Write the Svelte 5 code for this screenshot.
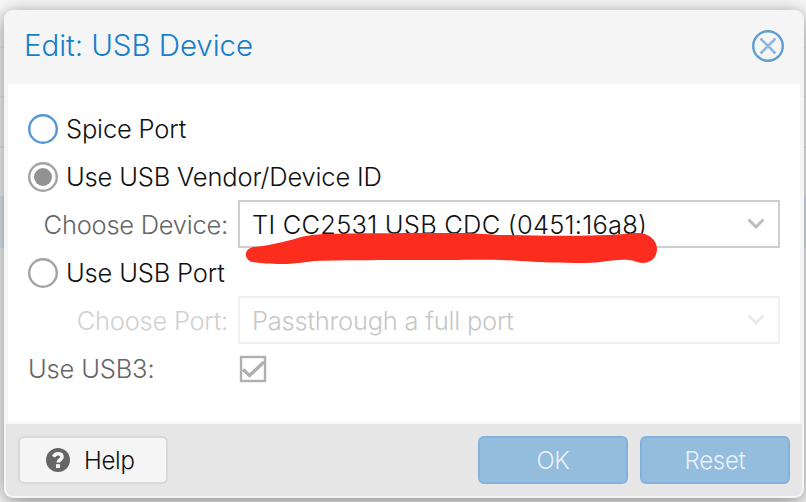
<script lang="ts">
	let mode = $state('vendor');
	let usb3 = $state(true);
	const devices = ['TI CC2531 USB CDC (0451:16a8)'];
	const ports = ['Passthrough a full port'];
</script>

{#snippet radio(value: string, label: string, focused: boolean)}
	<button class="option" class:focused role="radio" aria-checked={mode === value} onclick={() => (mode = value)}>
		<svg width="30" height="30" viewBox="0 0 30 30">
			<circle class="ring" cx="15" cy="15" r="13.8" />
			{#if mode === value}
				<circle class="dot" cx="15" cy="15" r="9" />
			{/if}
		</svg>
		<span>{label}</span>
	</button>
{/snippet}

{#snippet field(label: string, value: string, disabled: boolean)}
	<div class="field" class:disabled>
		<span class="label">{label}</span>
		<div class="combo">
			<span class="value">{value}</span>
			<svg width="18" height="12" viewBox="0 0 18 12">
				<path d="M1.5 1.5 L9 9 L16.5 1.5" />
			</svg>
		</div>
	</div>
{/snippet}

<div class="page">
	<div class="dialog">
		<header>
			<h1>Edit: USB Device</h1>
			<button class="close" aria-label="Close">
				<svg width="32" height="32" viewBox="0 0 32 32">
					<circle cx="16" cy="16" r="14.8" />
					<path d="M8.5 8.5 L23.5 23.5 M23.5 8.5 L8.5 23.5" />
				</svg>
			</button>
		</header>

		<main>
			{@render radio('spice', 'Spice Port', true)}
			{@render radio('vendor', 'Use USB Vendor/Device ID', false)}
			<div class="marked">
				{@render field('Choose Device:', devices[0], false)}
				<svg class="marker" width="413" height="32" viewBox="0 0 413 32">
					<path
						d="M9 15 C20 14 34 11 46 8 C58 4 65 3 78 2 C120 1 180 1 214 1 C235 1 245 3 260 3 C300 4 340 4 360 3 C375 3 385 1 393 1 C404 1 412 8 412 17 C412 25 406 31 398 31 C392 31 389 28 384 28 C368 27 358 31 340 31 C315 31 290 30 275 29 C245 27 220 28 190 28 C150 28 95 28 70 29 C58 30 50 32 36 32 C25 32 14 31 7 30 C-2 27 -1 16 9 15 Z"
					/>
				</svg>
			</div>
			{@render radio('port', 'Use USB Port', false)}
			{@render field('Choose Port:', ports[0], true)}
			<div class="check">
				<span class="label">Use USB3:</span>
				<button role="checkbox" aria-checked={usb3} aria-label="Use USB3" onclick={() => (usb3 = !usb3)}>
					<svg width="28" height="28" viewBox="0 0 28 28">
						<rect x="2" y="2" width="24" height="24" />
						{#if usb3}
							<path d="M4 14.5 L10.5 20.500 L25 7" />
						{/if}
					</svg>
				</button>
			</div>
		</main>

		<footer>
			<button class="help">
				<svg width="24" height="24" viewBox="0 0 24 24">
					<circle cx="12" cy="12" r="12" />
					<path d="M7.6 8.8 C8.5 6.8 10 5.8 12 5.8 C14.3 5.8 16 7 16 9 C16 11.8 12.2 11.8 12.2 14.6" />
					<rect x="10" y="16.2" width="4" height="3.8" />
				</svg>
				<span>Help</span>
			</button>
			<button class="primary ok">OK</button>
			<button class="primary reset">Reset</button>
		</footer>
	</div>
</div>

<style>
	:global(body) {
		margin: 0;
	}

	.page {
		box-sizing: border-box;
		width: 806px;
		height: 502px;
		padding: 10px 2px 4px 4px;
		overflow: hidden;
		background: linear-gradient(
			#f9f9f9 0 46px,
			#eee 46px 48px,
			#f9f9f9 48px 96px,
			#eee 96px 98px,
			#f9f9f9 98px 146px,
			#eee 146px 148px,
			#f9f9f9 148px 196px,
			#e3edf5 196px 248px,
			#f9f9f9 248px
		);
		font-family: Inter, 'Liberation Sans', sans-serif;
		font-size: 25.5px;
		font-weight: 300;
		letter-spacing: -0.17px;
	}

	.dialog {
		box-sizing: border-box;
		display: flex;
		flex-direction: column;
		width: 800px;
		height: 488px;
		border-radius: 9px;
		background: #f5f5f5;
		box-shadow: 0 4px 20px rgba(0, 0, 0, 0.48);
	}

	button {
		padding: 0;
		border: none;
		background: none;
		font: inherit;
		letter-spacing: inherit;
	}

	span,
	h1,
	.primary {
		white-space: nowrap;
	}

	svg {
		display: block;
		flex: none;
		fill: none;
	}

	header {
		display: flex;
		align-items: center;
		justify-content: space-between;
		height: 74px;
		padding: 0 20px;
		box-sizing: border-box;
	}

	h1 {
		margin: 0 0 4px;
		color: #157fcc;
		font-size: 29.5px;
		font-weight: 300;
		line-height: 36px;
		letter-spacing: -0.07px;
	}

	.close {
		margin-bottom: 2px;
	}

	.close circle {
		stroke: #5f9fcf;
		stroke-width: 2.4;
	}

	.close path {
		stroke: #8fb5e0;
		stroke-width: 2.6;
	}

	main {
		box-sizing: border-box;
		height: 338px;
		margin: 0 4px;
		padding: 20px;
		background: #fff;
	}

	.option {
		display: flex;
		align-items: center;
		gap: 8px;
		height: 48px;
		padding-top: 2px;
		color: #111;
	}

	.option span {
		margin-bottom: 2px;
	}

	.ring {
		stroke: #a3a3a3;
		stroke-width: 2.4;
	}

	.focused .ring {
		stroke: #5596d5;
	}

	.dot {
		fill: #929292;
	}

	.field {
		display: flex;
		align-items: center;
		gap: 10px;
		height: 48px;
	}

	.label {
		color: #666;
	}

	.field .label {
		width: 200px;
		text-align: right;
		letter-spacing: -0.25px;
	}

	.combo {
		box-sizing: border-box;
		display: flex;
		align-items: center;
		justify-content: space-between;
		width: 542px;
		height: 48px;
		padding: 0 13px 0 12px;
		border: 2px solid #cfcfcf;
		color: #111;
		letter-spacing: 0.22px;
	}

	.combo path {
		stroke: #bcbcbc;
		stroke-width: 3;
	}

	.disabled {
		opacity: 0.3;
	}

	.disabled .value {
		color: #444;
		letter-spacing: -0.24px;
	}

	.marked {
		position: relative;
	}

	.marker {
		position: absolute;
		left: 217px;
		top: 32px;
	}

	.marker path {
		fill: #fc2d1f;
	}

	.check {
		display: flex;
		align-items: center;
		height: 48px;
	}

	.check .label {
		width: 211px;
	}

	.check button {
		margin-top: 2px;
	}

	.check rect {
		stroke: #b0b0b0;
		stroke-width: 2.4;
	}

	.check path {
		stroke: #b0b0b0;
		stroke-width: 3.4;
	}

	footer {
		box-sizing: border-box;
		display: flex;
		align-items: center;
		gap: 12px;
		height: 72px;
		margin: 2px 2px 0;
		padding: 0 12px;
		border-radius: 0 0 7px 7px;
		background: #e6e6e6;
	}

	footer button {
		box-sizing: border-box;
		width: 150px;
		height: 48px;
		border: 2px solid #d8d8d8;
		border-radius: 6px;
		background: #f5f5f5;
		color: #111;
		font-size: 24px;
		letter-spacing: -0.3px;
	}

	.help {
		display: flex;
		align-items: center;
		gap: 14px;
		margin-right: auto;
		padding-left: 26px;
	}

	.help circle {
		fill: #666;
	}

	.help path {
		stroke: #f5f5f5;
		stroke-width: 3.6;
	}

	.help rect {
		fill: #f5f5f5;
	}

	footer .primary {
		border-color: #82b1dc;
		background: #93bcdd;
		color: #eaf2f9;
	}
</style>
